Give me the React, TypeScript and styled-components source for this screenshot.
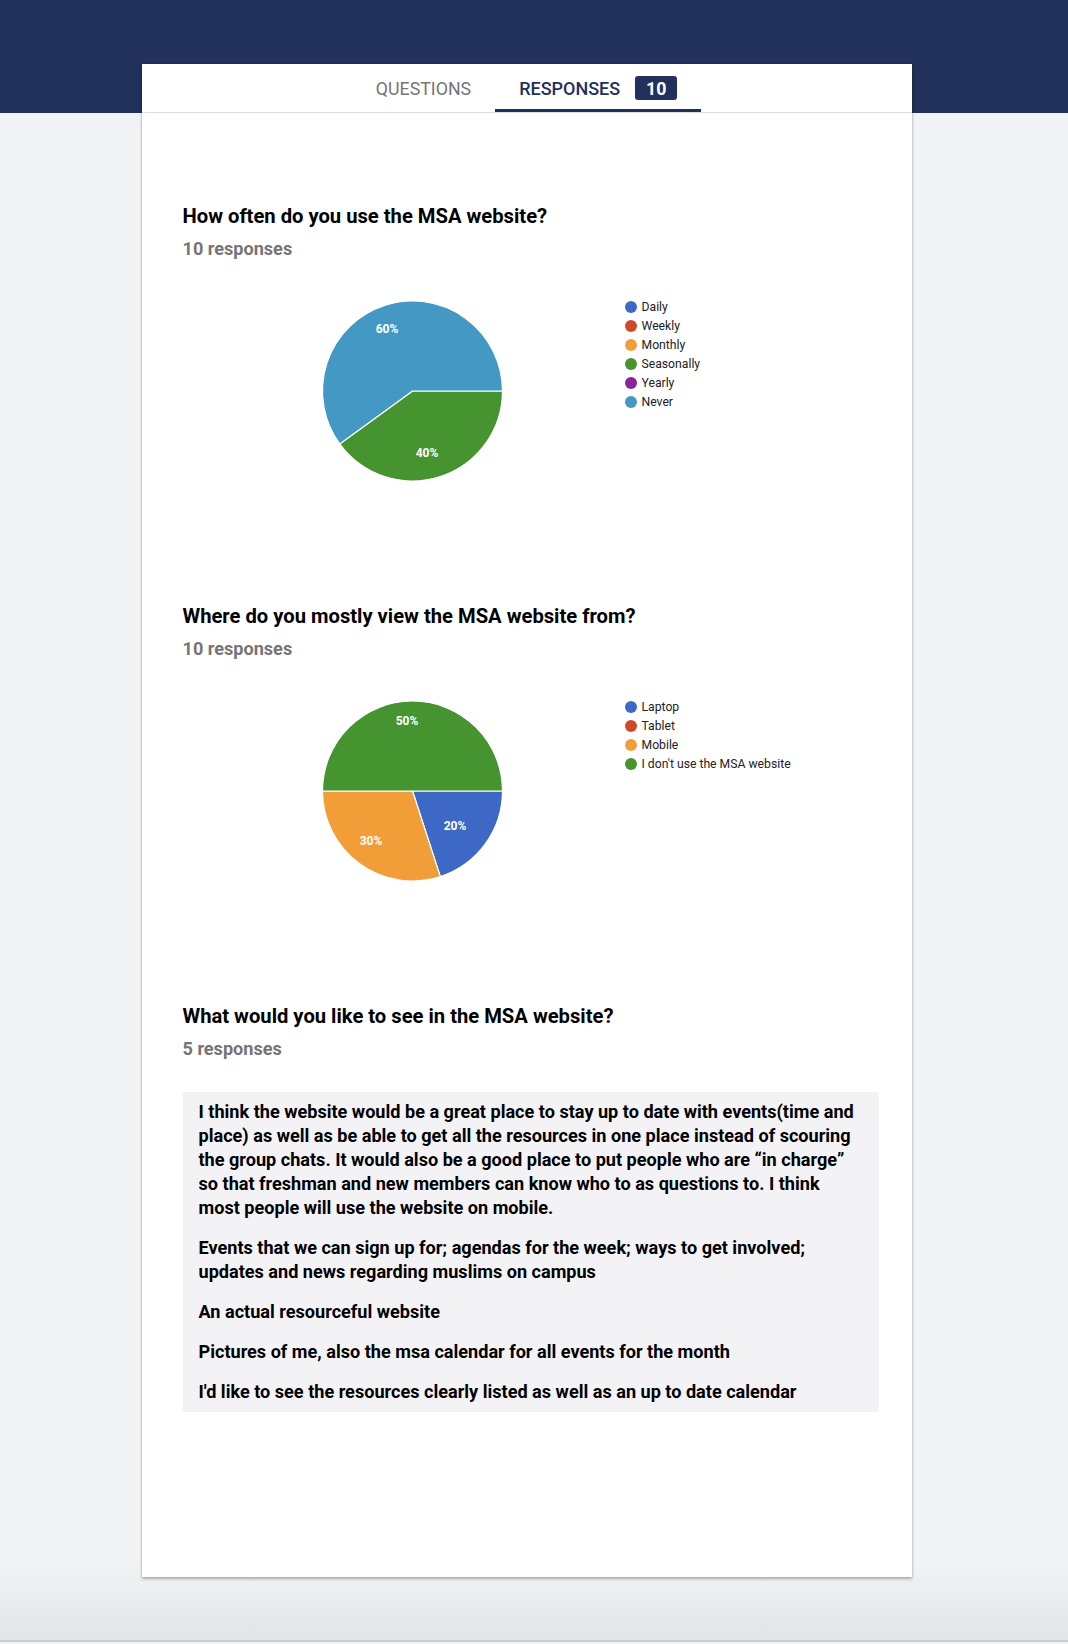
import React from "react";
import styled, { createGlobalStyle } from "styled-components";

const GlobalStyle = createGlobalStyle`
  html, body { margin: 0; padding: 0; }
  body { font-family: Roboto, "Noto Sans", Arial, sans-serif; }
`;

const Page = styled.div`
  min-height: 1644px;
  box-sizing: border-box;
  padding: 64px 15px 0 0;
  background: linear-gradient(
    to bottom,
    #22305c 0,
    #22305c 113px,
    #f2f3f5 113px,
    #f2f3f5 1560px,
    #e3e4e6 1640px,
    #cbccd0 1640px,
    #cbccd0 1642px,
    #eef0f5 1642px
  );
`;

const Card = styled.div`
  width: 770px;
  margin: 0 auto;
  background: #fff;
  box-shadow: 0 2px 3px rgba(0, 0, 0, 0.28), 0 0 1px rgba(0, 0, 0, 0.25);
`;

const TabBar = styled.div`
  display: flex;
  justify-content: center;
  height: 48px;
  border-bottom: 1px solid #dadce0;
`;

const Tab = styled.div<{ $active?: boolean }>`
  display: flex;
  align-items: center;
  gap: 15px;
  padding: 3px 24px 0;
  box-sizing: border-box;
  height: 48px;
  font-size: ${(p) => (p.$active ? "18px" : "17.8px")};
  font-weight: ${(p) => (p.$active ? 500 : 400)};
  color: ${(p) => (p.$active ? "#22305c" : "#757575")};
  border-bottom: 3px solid ${(p) => (p.$active ? "#22305c" : "transparent")};
`;

const Badge = styled.span`
  display: inline-flex;
  align-items: center;
  justify-content: center;
  width: 42px;
  height: 24px;
  border-radius: 3px;
  background: #22305c;
  color: #fff;
  font-size: 17.8px;
  font-weight: 700;
`;

const Body = styled.div`
  padding: 89px 32px 165px 41px;
`;

const Section = styled.section`
  & + & {
    margin-top: 101px;
  }
`;

const Title = styled.h2`
  margin: 0;
  font-size: 20.2px;
  line-height: 28px;
  font-weight: 700;
  color: #000;
`;

const Count = styled.div`
  margin-top: 7px;
  font-size: 18.1px;
  line-height: 24px;
  font-weight: 700;
  color: #757575;
`;

const ChartRow = styled.div`
  display: flex;
  align-items: flex-start;
  margin-top: 20px;
  padding-left: 79px;
  gap: 62px;
`;

const Legend = styled.ul`
  list-style: none;
  margin: 16px 0 0;
  padding: 0;
`;

const LegendItem = styled.li`
  display: flex;
  align-items: center;
  gap: 5px;
  height: 19px;
  font-size: 12.2px;
  color: #222;
`;

const Dot = styled.span<{ $color: string }>`
  width: 12px;
  height: 12px;
  border-radius: 50%;
  background: ${(p) => p.$color};
`;

const Answers = styled.div`
  margin-top: 31px;
  width: 696px;
  background: #f3f3f6;
`;

const Answer = styled.div`
  padding: 8px 16px;
  font-size: 18.1px;
  line-height: 24px;
  font-weight: 700;
  color: #000;
`;

type Slice = { label: string; color: string; value: number; lx?: number; ly?: number };

const W = 301;
const H = 220;
const CX = 150.5;
const CY = 110;
const R = 90;

function pt(angleDeg: number) {
  const a = (angleDeg * Math.PI) / 180;
  return [CX + R * Math.sin(a), CY - R * Math.cos(a)];
}

function Pie({ slices }: { slices: Slice[] }) {
  const total = slices.reduce((s, x) => s + x.value, 0);
  let start = 90;
  const parts: React.ReactNode[] = [];
  const labels: React.ReactNode[] = [];
  slices.forEach((s, i) => {
    if (!s.value) return;
    const sweep = (s.value / total) * 360;
    const end = start + sweep;
    const [x1, y1] = pt(start);
    const [x2, y2] = pt(end);
    const large = sweep > 180 ? 1 : 0;
    parts.push(
      <path
        key={i}
        d={`M${CX},${CY} L${x1},${y1} A${R},${R} 0 ${large} 1 ${x2},${y2} Z`}
        fill={s.color}
        stroke="#fff"
        strokeWidth={1.2}
      />
    );
    labels.push(
      <text
        key={"t" + i}
        x={CX + (s.lx ?? 0)}
        y={CY + (s.ly ?? 0) + 4}
        textAnchor="middle"
        fontSize="12"
        fontWeight="700"
        fill="#fff"
        fontFamily="Roboto, Arial, sans-serif"
      >
        {Math.round((s.value / total) * 100)}%
      </text>
    );
    start = end;
  });
  return (
    <svg width={W} height={H} viewBox={`0 0 ${W} ${H}`}>
      {parts}
      {labels}
    </svg>
  );
}

const q1: Slice[] = [
  { label: "Daily", color: "#3e68c6", value: 0 },
  { label: "Weekly", color: "#d0472a", value: 0 },
  { label: "Monthly", color: "#f29e38", value: 0 },
  { label: "Seasonally", color: "#459430", value: 4, lx: 14.5, ly: 62 },
  { label: "Yearly", color: "#8c2399", value: 0 },
  { label: "Never", color: "#4399c3", value: 6, lx: -25.5, ly: -62 },
];

const q2: Slice[] = [
  { label: "Laptop", color: "#3e68c6", value: 2, lx: 42.5, ly: 35 },
  { label: "Tablet", color: "#d0472a", value: 0 },
  { label: "Mobile", color: "#f29e38", value: 3, lx: -41.5, ly: 50 },
  { label: "I don't use the MSA website", color: "#459430", value: 5, lx: -5.5, ly: -70 },
];

const answers = [
  "I think the website would be a great place to stay up to date with events(time and place) as well as be able to get all the resources in one place instead of scouring the group chats. It would also be a good place to put people who are \u201cin charge\u201d so that freshman and new members can know who to as questions to. I think most people will use the website on mobile.",
  "Events that we can sign up for; agendas for the week; ways to get involved; updates and news regarding muslims on campus",
  "An actual resourceful website",
  "Pictures of me, also the msa calendar for all events for the month",
  "I'd like to see the resources clearly listed as well as an up to date calendar",
];

function ChartQuestion({ title, count, slices }: { title: string; count: string; slices: Slice[] }) {
  return (
    <Section>
      <Title>{title}</Title>
      <Count>{count}</Count>
      <ChartRow>
        <Pie slices={slices} />
        <Legend>
          {slices.map((s) => (
            <LegendItem key={s.label}>
              <Dot $color={s.color} />
              {s.label}
            </LegendItem>
          ))}
        </Legend>
      </ChartRow>
    </Section>
  );
}

export default function App() {
  return (
    <Page>
      <GlobalStyle />
      <Card>
        <TabBar>
          <Tab>QUESTIONS</Tab>
          <Tab $active>
            RESPONSES
            <Badge>10</Badge>
          </Tab>
        </TabBar>
        <Body>
          <ChartQuestion title="How often do you use the MSA website?" count="10 responses" slices={q1} />
          <ChartQuestion title="Where do you mostly view the MSA website from?" count="10 responses" slices={q2} />
          <Section>
            <Title>What would you like to see in the MSA website?</Title>
            <Count>5 responses</Count>
            <Answers>
              {answers.map((a, i) => (
                <Answer key={i}>{a}</Answer>
              ))}
            </Answers>
          </Section>
        </Body>
      </Card>
    </Page>
  );
}
